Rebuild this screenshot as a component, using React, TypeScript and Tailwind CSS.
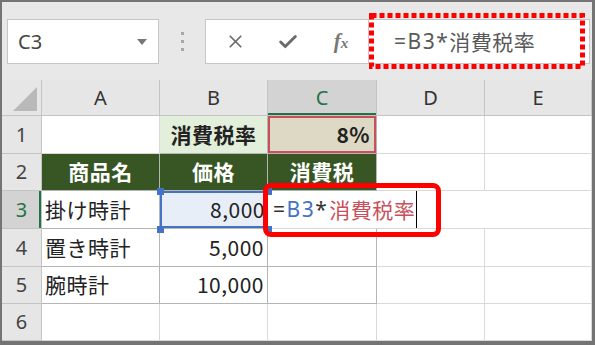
import React from "react";
import { X, Check } from "lucide-react";

const line = "border-[#d9d9d9]";
const tbl = "border-[#b5b5b5]";
const latin = "font-['Noto_Sans',sans-serif] tracking-[1.5px]";

const Cell = ({
  children,
  className = "",
}: {
  children?: React.ReactNode;
  className?: string;
}) => (
  <div
    className={`flex items-center border-r border-b overflow-hidden whitespace-nowrap ${className}`}
  >
    {children}
  </div>
);

const ColHead = ({ label, active }: { label: string; active?: boolean }) => (
  <Cell
    className={`justify-center border-[#c4c4c4] ${
      active
        ? "bg-[#d3d3d3] text-[#217346] shadow-[inset_0_-2px_0_#217346]"
        : "bg-[#e6e6e6] text-[#333]"
    } font-['Noto_Sans',sans-serif] text-[20px] tracking-normal`}
  >
    {label}
  </Cell>
);

const RowHead = ({ label, active }: { label: string; active?: boolean }) => (
  <Cell
    className={`justify-center border-[#c4c4c4] ${
      active
        ? "bg-[#d3d3d3] text-[#217346] shadow-[inset_-2px_0_0_#217346]"
        : "bg-[#e6e6e6] text-[#444]"
    } font-['Noto_Sans',sans-serif] text-[20px] tracking-normal`}
  >
    {label}
  </Cell>
);

export default function App() {
  return (
    <div className="w-[595px] h-[345px] border-l-2 border-t-2 border-r-[3px] border-b-[4px] border-[#747474] bg-[#e8e8e8] overflow-hidden relative font-['Noto_Sans_CJK_JP',sans-serif]">
      {/* formula bar */}
      <div className="h-[78px] flex items-start pt-[17px] pl-[5px] pr-[2px] relative">
        <div className="w-[152px] h-[45px] bg-white border border-[#c6c6c6] flex items-center justify-between pl-[10px] pr-[11px]">
          <span className="text-[20px] text-[#444] font-['Noto_Sans',sans-serif]">C3</span>
          <svg width="10" height="6" viewBox="0 0 10 6">
            <path d="M0 0 L10 0 L5 6 Z" fill="#777" />
          </svg>
        </div>
        <div className="w-[46px] h-[45px] flex flex-col items-center justify-center gap-[5px]">
          <div className="w-[3px] h-[3px] bg-[#a8a8a8]" />
          <div className="w-[3px] h-[3px] bg-[#a8a8a8]" />
          <div className="w-[3px] h-[3px] bg-[#a8a8a8]" />
        </div>
        <div className="w-[164px] h-[45px] bg-white border border-[#c6c6c6] flex items-center text-[#6b6b6b]">
          <div className="w-[56px] flex justify-center pl-[2px]">
            <X size={21} strokeWidth={2} />
          </div>
          <div className="w-[52px] flex justify-center">
            <Check size={22} strokeWidth={3.2} />
          </div>
          <div className="w-[54px] flex justify-center items-baseline font-['Liberation_Serif',serif] italic font-bold text-[#777]">
            <span className="text-[21px]">f</span>
            <span className="text-[15px]">x</span>
          </div>
        </div>
        <div className="flex-1 h-[45px] bg-white border border-l-0 border-[#c6c6c6] flex items-center pl-[25px] text-[21px] tracking-[0.5px] text-[#595959]">
          <span className={latin}>=B3*</span>
          <span>消費税率</span>
        </div>
        <svg
          className="absolute left-[367px] top-[11px]"
          width="216"
          height="56"
          viewBox="0 0 216 56"
        >
          <rect
            x="2.5"
            y="2.5"
            width="211"
            height="51"
            fill="none"
            stroke="#ff0000"
            strokeWidth="5"
            strokeDasharray="5 3"
          />
        </svg>
      </div>

      {/* sheet grid */}
      <div className="relative grid grid-cols-[40px_118px_108px_109px_108px_107px] grid-rows-[36px_38px_37px_38px_38px_37px_37px] bg-white text-[21px] tracking-[0.5px] text-[#222]">
        <Cell className="bg-[#e6e6e6] border-[#c4c4c4] items-end justify-end pr-[4px] pb-[4px]">
          <svg width="24" height="24" viewBox="0 0 24 24">
            <path d="M24 0 L24 24 L0 24 Z" fill="#b9b9b9" />
          </svg>
        </Cell>
        <ColHead label="A" />
        <ColHead label="B" />
        <ColHead label="C" active />
        <ColHead label="D" />
        <ColHead label="E" />

        <RowHead label="1" />
        <Cell className={line} />
        <Cell className={`${tbl} bg-[#e2efda] justify-center font-bold`}>消費税率</Cell>
        <Cell className={`${tbl} bg-[#ddd9c4] justify-end pr-[6px] font-bold shadow-[inset_0_0_0_2px_#c9505a]`}>
          8%
        </Cell>
        <Cell className={line} />
        <Cell className={line} />

        <RowHead label="2" />
        <Cell className={`${tbl} bg-[#375623] text-white font-bold justify-center`}>商品名</Cell>
        <Cell className={`${tbl} bg-[#375623] text-white font-bold justify-center`}>価格</Cell>
        <Cell className={`${tbl} bg-[#375623] text-white font-bold justify-center`}>消費税</Cell>
        <Cell className={line} />
        <Cell className={line} />

        <RowHead label="3" active />
        <Cell className={`${tbl} pl-[3px]`}>掛け時計</Cell>
        <Cell className={`${tbl} bg-[#e8eef8] justify-end pr-[2px] shadow-[inset_0_0_0_2px_#4472c4]`}>
          8,000
        </Cell>
        <Cell className={`${line} col-span-3 pl-[5px]`}>
          <span className={`text-[#333] ${latin}`}>=</span>
          <span className={`text-[#4472c4] ${latin}`}>B3</span>
          <span className={`text-[#333] ${latin}`}>*</span>
          <span className="text-[#c9505a] ml-[1px]">消費税率</span>
          <span className="ml-[1px] w-[1px] h-[38px] bg-black" />
        </Cell>

        <RowHead label="4" />
        <Cell className={`${tbl} pl-[3px]`}>置き時計</Cell>
        <Cell className={`${tbl} justify-end pr-[3px]`}>5,000</Cell>
        <Cell className={tbl} />
        <Cell className={line} />
        <Cell className={line} />

        <RowHead label="5" />
        <Cell className={`${tbl} pl-[3px]`}>腕時計</Cell>
        <Cell className={`${tbl} justify-end pr-[3px]`}>10,000</Cell>
        <Cell className={tbl} />
        <Cell className={line} />
        <Cell className={line} />

        <RowHead label="6" />
        <Cell className={line} />
        <Cell className={line} />
        <Cell className={line} />
        <Cell className={line} />
        <Cell className={line} />

        {/* reference handles on B3 */}
        <div className="absolute left-[155px] top-[108px] w-[7px] h-[7px] bg-[#4472c4]" />
        <div className="absolute left-[155px] top-[146px] w-[7px] h-[7px] bg-[#4472c4]" />
        <div className="absolute left-[263px] top-[108px] w-[7px] h-[7px] bg-[#4472c4]" />
        <div className="absolute left-[263px] top-[146px] w-[7px] h-[7px] bg-[#4472c4]" />

        {/* red callout around edited cell */}
        <div className="absolute left-[261px] top-[103px] w-[178px] h-[54px] border-[5px] border-[#ff0000] rounded-[8px]" />
      </div>
    </div>
  );
}
